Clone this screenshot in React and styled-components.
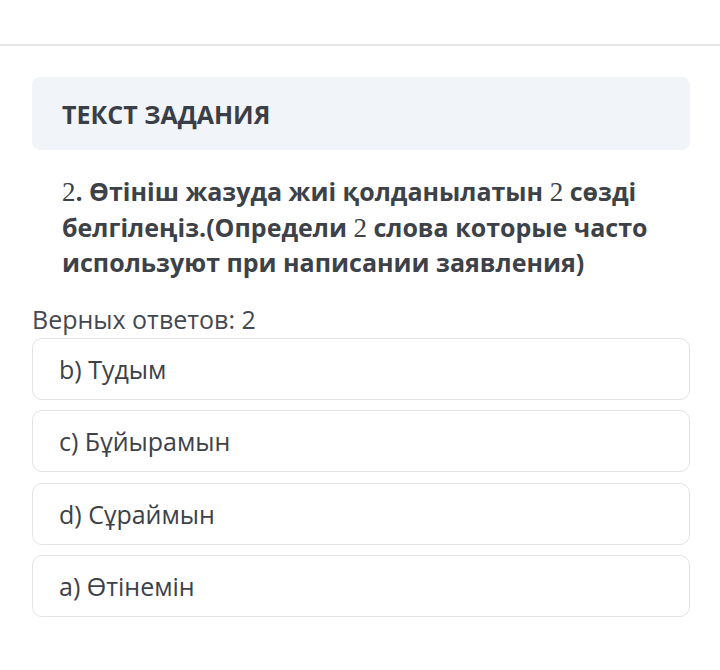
import React from "react";
import styled, { createGlobalStyle } from "styled-components";

const GlobalStyle = createGlobalStyle`
  body {
    margin: 0;
    background: #fff;
    font-family: "Open Sans", "Noto Sans", sans-serif;
    color: #3d4148;
  }
`;

const answers = ["b) Тудым", "c) Бұйырамын", "d) Сұраймын", "a) Өтінемін"];

export default function App() {
  return (
    <>
      <GlobalStyle />
      <TopBar />
      <Page>
        <TaskHeader>
          <h2>ТЕКСТ ЗАДАНИЯ</h2>
        </TaskHeader>
        <Question>
          <Num>2</Num>. Өтініш жазуда жиі қолданылатын <Num>2</Num> сөзді
          белгілеңіз.(Определи <Num>2</Num> слова которые часто используют при
          написании заявления)
        </Question>
        <Counter>Верных ответов: 2</Counter>
        <Answers>
          {answers.map((a) => (
            <Answer key={a}>{a}</Answer>
          ))}
        </Answers>
      </Page>
    </>
  );
}

const TopBar = styled.div`
  height: 44px;
  border-bottom: 2px solid #e6e6e6;
`;

const Page = styled.div`
  padding: 31px 30px 0 32px;
`;

const TaskHeader = styled.div`
  background: #f1f4f8;
  border-radius: 8px;
  height: 73px;
  display: flex;
  align-items: center;
  padding: 0 30px;

  h2 {
    margin: 0;
    font-size: 25px;
    font-weight: 700;
    color: #3a3e46;
    letter-spacing: 0;
  }
`;

const Question = styled.p`
  margin: 24px 0 0;
  padding: 0 28px 0 30px;
  font-size: 25px;
  line-height: 34.5px;
  font-weight: 700;
  color: #3d4148;
`;

const Num = styled.span`
  font-family: "Liberation Serif", "DejaVu Serif", serif;
  font-weight: 400;
  font-size: 27px;
`;

const Counter = styled.div`
  margin-top: 24px;
  font-size: 25px;
  line-height: 30px;
  color: #444850;
`;

const Answers = styled.div`
  margin-top: 4px;
  display: flex;
  flex-direction: column;
  gap: 10.6px;
`;

const Answer = styled.div`
  height: 62px;
  box-sizing: border-box;
  border: 1.5px solid #e3e3e3;
  border-radius: 10px;
  display: flex;
  align-items: center;
  padding: 0 26px;
  font-size: 25px;
  color: #3d4148;
`;
